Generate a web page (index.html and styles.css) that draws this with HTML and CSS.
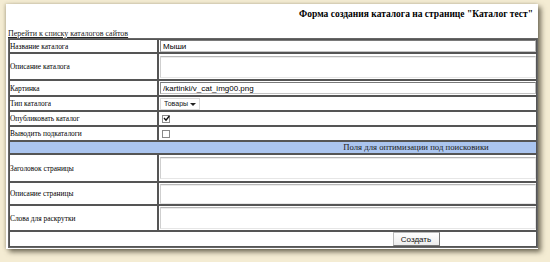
FILE: index.html
```html
<!DOCTYPE html>
<html lang="ru">

<head>
    <meta charset="UTF-8">
    <meta name="viewport" content="width=device-width, initial-scale=1.0">
    <title>Форма создания каталога</title>

    <link rel="stylesheet" href="styles.css">
</head>

<body>
    <div class="panel">
        <h1 class="title">Форма создания каталога на странице "Каталог тест"</h1>
        <a class="back" href="#">Перейти к списку каталогов сайтов</a>

        <table class="form">
            <tr class="r-13">
                <td class="label">Название каталога</td>
                <td class="field"><input class="text" type="text" value="Мыши"></td>
            </tr>
            <tr class="r-27">
                <td class="label">Описание каталога</td>
                <td class="field"><textarea class="area"></textarea></td>
            </tr>
            <tr class="r-16">
                <td class="label">Картинка</td>
                <td class="field"><input class="text" type="text" value="/kartinki/v_cat_img00.png"></td>
            </tr>
            <tr class="r-15">
                <td class="label">Тип каталога</td>
                <td class="field">
                    <span class="select">
                        <select>
                            <option>Товары</option>
                        </select>
                        <span class="arrow"></span>
                    </span>
                </td>
            </tr>
            <tr class="r-15">
                <td class="label">Опубликовать каталог</td>
                <td class="field">
                    <span class="check">
                        <svg width="7" height="7" viewBox="0 0 7 7">
                            <path d="M1 3 L3 5.2 L6.3 1" fill="none" stroke="#111" stroke-width="1.4" />
                        </svg>
                    </span>
                </td>
            </tr>
            <tr class="r-15">
                <td class="label">Выводить подкаталоги</td>
                <td class="field"><span class="check"></span></td>
            </tr>
            <tr class="r-13">
                <td class="section" colspan="2">Поля для оптимизации под поисковики</td>
            </tr>
            <tr class="r-28">
                <td class="label">Заголовок страницы</td>
                <td class="field"><textarea class="area"></textarea></td>
            </tr>
            <tr class="r-23">
                <td class="label">Описание страницы</td>
                <td class="field"><textarea class="area"></textarea></td>
            </tr>
            <tr class="r-26">
                <td class="label">Слова для раскрутки</td>
                <td class="field"><textarea class="area"></textarea></td>
            </tr>
            <tr class="r-15">
                <td class="submit" colspan="2"><button class="btn" type="button">Создать</button></td>
            </tr>
        </table>
    </div>
</body>

</html>
```

FILE: styles.css
```css
:root {
    --label-width: 149px;
    --right-center: 286px;
}

html {
    height: 100%;
}

body {
    margin: 0;
    height: 100%;
    background-color: #f4ecd3;
    font-family: "Liberation Serif", serif;
    color: #000;
}

.panel {
    width: 530px;
    height: 242px;
    margin: 4px 0 0 6px;
    padding: 0 0 3px 2px;
    background-color: #fff;
    box-shadow: 3px 3px 5px rgba(60, 55, 40, 0.7), -1px 0 3px rgba(120, 110, 80, 0.35);
}

.title {
    margin: 0;
    padding: 4px 5px 0 0;
    height: 21px;
    text-align: right;
    font-size: 9.5px;
    line-height: 12px;
    font-weight: bold;
}

.back {
    display: block;
    height: 9px;
    font-size: 8px;
    line-height: 9px;
    color: #222;
    text-decoration: underline;
}

.form {
    width: 530px;
    border-collapse: separate;
    border-spacing: 0;
    border: 1px solid #666;
    table-layout: fixed;
}

.form td {
    box-sizing: border-box;
    border: 1px solid #555;
    padding: 0;
    font-size: 7.4px;
    line-height: 9px;
    vertical-align: middle;
    color: #000;
}

.r-13 { height: 13px; }
.r-15 { height: 15px; }
.r-16 { height: 16px; }
.r-23 { height: 23px; }
.r-26 { height: 26px; }
.r-27 { height: 27px; }
.r-28 { height: 28px; }

.form td.label {
    width: var(--label-width);
    padding-left: 0;
}

.form td.field {
    padding: 0 0 0 1px;
}

.text {
    display: block;
    box-sizing: border-box;
    width: 100%;
    height: 12px;
    margin: 0;
    padding: 0 2px;
    border: 1px solid;
    border-color: #7a7a7a #b8b8b8 #c4c4c4 #8e8e8e;
    font-family: "Liberation Sans", sans-serif;
    font-size: 8px;
    color: #000;
    outline: none;
}

.area {
    display: block;
    box-sizing: border-box;
    width: 100%;
    height: 22px;
    margin: 0;
    padding: 0;
    resize: none;
    border: 1px solid;
    border-color: #b8b8b8 #e6e6e6 #e6e6e6 #cfcfcf;
    box-shadow: inset 0 1px 0 #ececec;
    outline: none;
}

.r-23 .area {
    height: 20px;
}

.select {
    position: relative;
    display: inline-block;
    vertical-align: middle;
}

.select select {
    appearance: none;
    display: block;
    width: 40px;
    height: 12px;
    margin: 0;
    padding: 0 0 0 3px;
    border: 1px solid #dadada;
    border-radius: 0;
    background-color: #fff;
    font-family: "Liberation Sans", sans-serif;
    font-size: 7px;
    color: #111;
    outline: none;
}

.select .arrow {
    position: absolute;
    right: 4px;
    top: 5px;
    width: 0;
    height: 0;
    border-left: 3px solid transparent;
    border-right: 3px solid transparent;
    border-top: 3px solid #222;
}

.check {
    display: inline-block;
    vertical-align: middle;
    box-sizing: border-box;
    width: 8px;
    height: 8px;
    margin-left: 2px;
    border: 1px solid #8a8a8a;
    background-color: #fff;
    line-height: 0;
}

.check svg {
    margin: -1px 0 0 0;
}

.form td.section {
    background-color: #abc5ef;
    padding-left: var(--right-center);
    text-align: center;
    font-size: 8.7px;
    color: #222;
}

.form td.submit {
    padding-left: var(--right-center);
    text-align: center;
}

.btn {
    box-sizing: border-box;
    width: 47px;
    height: 14px;
    margin: 0;
    padding: 0;
    border: 1px solid;
    border-color: #bbb #777 #777 #bbb;
    background: linear-gradient(#fff, #ececec);
    font-family: "Liberation Sans", sans-serif;
    font-size: 8px;
    color: #111;
    vertical-align: middle;
}
```
